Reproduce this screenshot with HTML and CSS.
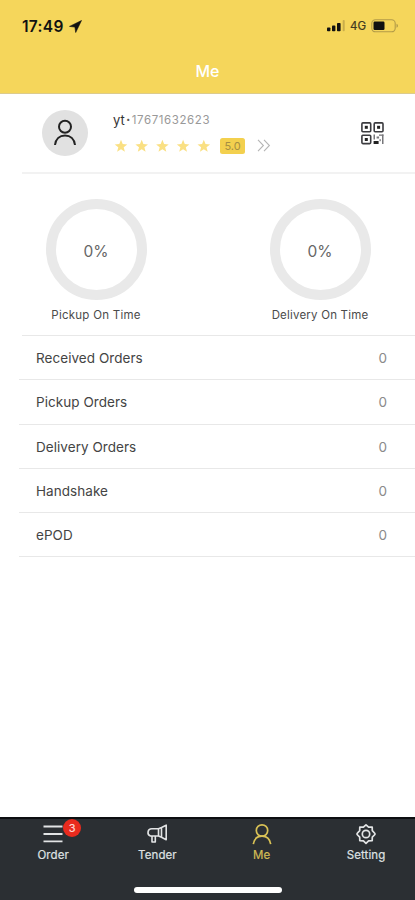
FILE: index.html
```html
<!DOCTYPE html>
<html lang="en">
<head>
<meta charset="utf-8">
<title>Me</title>
<link rel="stylesheet" href="styles.css">
</head>
<body>
<div class="app">
  <header class="header">
    <div class="status">
      <span class="clock">17:49</span>
      <svg class="location" width="13" height="13" viewBox="0 0 13 13"><path d="M12.500.5.5 6.400l5.400.7.8 5.400z" fill="#111" stroke="#111" stroke-width=".6" stroke-linejoin="round"/></svg>
      <svg class="signal" width="19" height="12" viewBox="0 0 19 12"><g fill="#111"><rect y="7.500" width="3.400" height="3.800" rx=".8"/><rect x="5" y="5.600" width="3.400" height="5.700" rx=".8"/><rect x="10" y="3" width="3.600" height="8.300" rx=".8"/></g><rect x="15.700" y="0" width="2" height="11.300" rx=".8" fill="#c9ae4b"/></svg>
      <span class="network">4G</span>
      <svg class="battery" width="28" height="14" viewBox="0 0 28 14"><rect x=".8" y=".8" width="23.400" height="12" rx="3.600" fill="none" stroke="#b29b48" stroke-width="1.100"/><rect x="2.500" y="2.500" width="11" height="8.400" rx="1.200" fill="#111"/><path d="M25.500 4.800c2 .8 2 3.200 0 4z" fill="#b29b48"/></svg>
    </div>
    <h1 class="title">Me</h1>
  </header>

  <main>
    <section class="profile">
      <div class="avatar">
        <svg width="24" height="28" viewBox="0 0 24 28" fill="none" stroke="#222" stroke-width="2"><circle cx="12" cy="7.700" r="6"/><path d="M2 26c.6-6.200 4.700-9.600 10-9.600s9.400 3.400 10 9.600"/></svg>
      </div>
      <div class="details">
        <div class="name">yt<span class="dot">•</span><span class="phone">17671632623</span></div>
        <div class="rating">
          <svg class="stars" width="98" height="14" viewBox="0 0 98 14" fill="#fae083">
            <defs><path id="star" d="m7 .8 1.700 4.300 4.600.3-3.600 2.900 1.200 4.500L7 10.300l-3.900 2.500 1.200-4.500L.7 5.400l4.600-.3z"/></defs>
            <use href="#star"/><use href="#star" x="20.700"/><use href="#star" x="41.400"/><use href="#star" x="62.100"/><use href="#star" x="82.800"/>
          </svg>
          <span class="score">5.0</span>
          <svg class="more" width="14" height="13" viewBox="0 0 14 13" fill="none" stroke="#b5b5b5" stroke-width="1.100"><path d="m1 .8 5.400 5.700L1 12.200M7 .8l5.400 5.700L7 12.200"/></svg>
        </div>
      </div>
      <svg class="qr" width="23" height="23" viewBox="0 0 23 23">
        <g fill="none" stroke="#3b3b3f" stroke-width="1.600"><rect x=".9" y=".9" width="8.800" height="8.800" rx="1"/><rect x="13.200" y=".9" width="8.800" height="8.800" rx="1"/><rect x=".9" y="13.200" width="8.800" height="8.400" rx="1"/></g>
        <g fill="#222"><rect x="3.800" y="3.800" width="3" height="3"/><rect x="16.100" y="3.800" width="3" height="3"/><rect x="3.800" y="16" width="3" height="3"/><rect x="12.600" y="19" width="5" height="3"/></g>
        <g fill="#77777b"><rect x="12.500" y="12.500" width="1.500" height="5"/><rect x="15.600" y="14.500" width="2.500" height="2"/><rect x="18" y="12.500" width="4.500" height="1.300"/><rect x="21" y="12.500" width="1.500" height="9.500"/><rect x="18.500" y="17.200" width="1.300" height="2"/></g>
      </svg>
    </section>

    <section class="charts">
      <div class="chart"><div class="ring">0%</div><div class="caption">Pickup On Time</div></div>
      <div class="chart"><div class="ring">0%</div><div class="caption delivery">Delivery On Time</div></div>
    </section>

    <ul class="list">
      <li><span>Received Orders</span><b>0</b></li>
      <li><span>Pickup Orders</span><b>0</b></li>
      <li><span>Delivery Orders</span><b>0</b></li>
      <li><span>Handshake</span><b>0</b></li>
      <li><span>ePOD</span><b>0</b></li>
    </ul>
  </main>

  <footer class="footer">
    <nav class="tabs">
      <a class="tab"><span class="icon"><svg width="20" height="22" viewBox="0 0 20 22" stroke="#e2e4e5" stroke-width="1.800"><path d="M.5 3.500h19M.5 11h19M.5 18.300h19"/></svg><i class="badge">3</i></span>Order</a>
      <a class="tab"><span class="icon"><svg width="22" height="22" viewBox="0 0 22 22" fill="none" stroke="#e2e4e5" stroke-width="1.600" stroke-linejoin="round"><path d="M12.500 5.800H5.700a3.700 3.700 0 0 0-1.200 7.200h8zM12.500 5.800l3-1.300v9.800l-3-1.300M15.500 4.500l4.700-2.300v14.600l-4.700-2.500M6 13v6h3.300v-6"/></svg></span>Tender</a>
      <a class="tab active"><span class="icon"><svg width="20" height="22" viewBox="0 0 20 22" fill="none" stroke="#d9c256" stroke-width="1.700"><circle cx="10" cy="7.500" r="5.700"/><path d="M1.300 21.200c.8-4.800 3.500-8 8.700-8s7.900 3.200 8.700 8"/></svg></span>Me</a>
      <a class="tab"><span class="icon"><svg width="22" height="22" viewBox="0 0 22 22" fill="none" stroke="#e2e4e5" stroke-width="1.700" stroke-linejoin="round"><path d="m11 1.800 2.600 2.400 3.600-.1.100 3.600 2.600 2.800v1l-2.600 2.600-.1 3.600-3.600.1L11 20.300l-2.600-2.500-3.600-.1-.1-3.600-2.600-2.600v-1l2.600-2.800.1-3.600 3.600.1z"/><circle cx="11" cy="11" r="3.700"/></svg></span>Setting</a>
    </nav>
    <div class="home"></div>
  </footer>
</div>
</body>
</html>
```
FILE: styles.css
```css
* { box-sizing: border-box; }
body { margin: 0; background: #fff; font-family: Inter, "Liberation Sans", sans-serif; color: #444; }
.app { width: 415px; height: 900px; display: flex; flex-direction: column; overflow: hidden; }
.header { height: 94px; flex: none; background: #f5d65b; border-bottom: 1px solid #dccb8c; }
.status { height: 52px; display: flex; align-items: center; padding: 0 16px 0 22px; color: #111; }
.clock { width: 43px; font-size: 15.5px; font-weight: 600; letter-spacing: .3px; }
.location { margin-left: 4px; }
.signal { margin-left: auto; }
.network { margin-left: 4px; width: 17px; font-size: 11.5px; color: #40391f; -webkit-text-stroke: .2px #40391f; }
.battery { margin-left: 4px; }
.title { margin: 8px 0 0; text-align: center; font-size: 16px; line-height: 22px; font-weight: 500; color: #fff; }
main { flex: 1; }
.profile { height: 80px; margin-left: 22px; padding: 16px 31px 0 20px; border-bottom: 2px solid #f2f2f2; display: flex; align-items: flex-start; }
.avatar { width: 46px; height: 46px; border-radius: 50%; background: #e1e1e1; display: flex; align-items: center; justify-content: center; }
.details { margin-left: 25px; padding-top: 1px; }
.name { display: flex; align-items: center; height: 17px; font-size: 13px; color: #333; }
.dot { width: 7px; font-size: 7px; text-align: center; color: #555; }
.phone { font-size: 11.5px; letter-spacing: .6px; color: #999; }
.rating { display: flex; align-items: center; margin-top: 9px; height: 17px; }
.stars { margin-left: 1px; }
.score { width: 25px; height: 16px; margin-left: 8px; border-radius: 2.5px; background: #f3d04e; color: #a58e43; font-size: 11px; line-height: 16px; text-align: center; }
.more { margin-left: 12px; }
.qr { margin: 12px 0 0 auto; }
.charts { height: 162px; margin-left: 22px; padding: 25px 40px 0 19px; display: flex; justify-content: space-between; border-bottom: 1px solid #e8e8e8; }
.chart { width: 110px; display: flex; flex-direction: column; align-items: center; }
.ring { width: 101px; height: 101px; border-radius: 50%; border: 10px solid #e9e9e9; display: flex; align-items: center; justify-content: center; padding-top: 4px; font-size: 15.5px; color: #666; }
.caption { margin-top: 7px; font-size: 11.5px; line-height: 17px; letter-spacing: .25px; color: #4b4b4b; white-space: nowrap; }
.delivery { letter-spacing: .2px; }
.list { margin: 0 0 0 19px; padding: 0; list-style: none; }
.list li { height: 44.3px; padding: 1px 28px 0 17px; display: flex; align-items: center; justify-content: space-between; border-bottom: 1px solid #e8e8e8; font-size: 13.5px; letter-spacing: .05px; }
.list b { font-weight: 400; color: #8a8a8a; }
.footer { height: 83px; flex: none; background: #2b2f33; border-top: 2px solid #0d0f11; }
.tabs { height: 65px; display: flex; padding: 4px 0 0 1px; }
.tab { width: 104.300px; flex: none; display: flex; flex-direction: column; align-items: center; font-size: 11.5px; line-height: 16px; letter-spacing: .1px; color: #dfe1e2; -webkit-text-stroke: .2px; }
.icon { position: relative; height: 24px; }
.active { color: #d3bd55; }
.badge { position: absolute; left: 20px; top: -4px; width: 18px; height: 18px; border-radius: 50%; background: #e92b1e; color: #ffd9d5; font-size: 11px; line-height: 18px; font-style: normal; text-align: center; }
.home { width: 148px; height: 6px; margin: 3px 0 0 134px; border-radius: 3px; background: #fff; }
```
